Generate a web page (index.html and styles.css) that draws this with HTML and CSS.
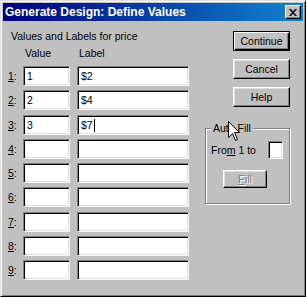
FILE: index.html
```html
<!doctype html>
<html>
<head>
<title>Generate Design: Define Values</title>
<link rel="stylesheet" href="styles.css">
</head>
<body>
	<div class="window">
		<div class="titlebar">
			<span class="title">Generate Design: Define Values</span>
			<span class="closeBtn"><svg width="8" height="7" viewBox="0 0 8 7"><path d="M0 0 L2 0 L4 2.5 L6 0 L8 0 L5 3.5 L8 7 L6 7 L4 4.5 L2 7 L0 7 L3 3.5 Z" fill="#000"/></svg></span>
		</div>

		<div class="client">
			<div class="values">
				<div class="caption">Values and Labels for price</div>
				<div class="grid">
					<span></span><span class="head">Value</span><span class="head">Label</span>
					<span class="num"><u>1</u>:</span><span class="field">1</span><span class="field">$2</span>
					<span class="num"><u>2</u>:</span><span class="field">2</span><span class="field">$4</span>
					<span class="num"><u>3</u>:</span><span class="field">3</span><span class="field">$7<span class="caret"></span></span>
					<span class="num"><u>4</u>:</span><span class="field"></span><span class="field"></span>
					<span class="num"><u>5</u>:</span><span class="field"></span><span class="field"></span>
					<span class="num"><u>6</u>:</span><span class="field"></span><span class="field"></span>
					<span class="num"><u>7</u>:</span><span class="field"></span><span class="field"></span>
					<span class="num"><u>8</u>:</span><span class="field"></span><span class="field"></span>
					<span class="num"><u>9</u>:</span><span class="field"></span><span class="field"></span>
				</div>
			</div>

			<div class="side">
				<button class="btn btnDefault">Continue</button>
				<button class="btn">Cancel</button>
				<button class="btn">Help</button>
				<fieldset class="group">
					<legend>Auto Fill</legend>
					<div class="fromRow">
						<span>Fro<u>m</u> 1 to</span><span class="field fieldSmall"></span>
					</div>
					<button class="btn btnFill" disabled><u>F</u>ill</button>
				</fieldset>
			</div>
		</div>

		<svg class="cursor" width="13" height="20" viewBox="0 0 13 20"><path d="M0.5 0.5 L0.5 16.5 L4.5 12.5 L7.5 19.5 L9.5 18.5 L6.5 11.5 L11.5 11.5 Z" fill="#fff" stroke="#000" stroke-width="1"/></svg>
	</div>
</body>
</html>
```

FILE: styles.css
```css
body {
	margin: 0;
	font-family: "Liberation Sans", Arial, sans-serif;
	font-size: 10.5px;
	color: #000;
}

.window {
	position: relative;
	width: 306px;
	height: 297px;
	box-sizing: border-box;
	background-color: #c0c0c0;
	border-top: 1px solid #dfdfdf;
	border-left: 1px solid #dfdfdf;
	border-right: 1px solid #000;
	border-bottom: 1px solid #000;
	box-shadow: inset 1px 1px #fff, inset -1px -1px #808080;
	padding: 2px;
}

.titlebar {
	display: flex;
	align-items: center;
	justify-content: space-between;
	height: 18px;
	padding-left: 2px;
	padding-right: 2px;
	background: linear-gradient(to right, #000080, #1084d0);
}

.title {
	color: #fff;
	font-weight: bold;
	font-size: 12px;
	white-space: nowrap;
}

.closeBtn {
	display: flex;
	align-items: center;
	justify-content: center;
	width: 16px;
	height: 14px;
	box-sizing: border-box;
	background-color: #c0c0c0;
	border-top: 1px solid #fff;
	border-left: 1px solid #fff;
	border-right: 1px solid #000;
	border-bottom: 1px solid #000;
	box-shadow: inset -1px -1px #808080;
}

.client {
	display: flex;
	padding-left: 5px;
}

.values {
	padding-top: 9px;
}

.caption {
	line-height: 12px;
	margin-left: 3px;
	white-space: nowrap;
}

.grid {
	display: grid;
	grid-template-columns: 8px 47px 112px;
	column-gap: 7px;
	row-gap: 4.25px;
	margin-top: 5px;
	align-items: center;
}

.head {
	line-height: 12px;
	padding-left: 2px;
	margin-bottom: 2.75px;
}

.num {
	white-space: nowrap;
}

.field {
	display: block;
	height: 20px;
	line-height: 18px;
	box-sizing: border-box;
	padding-left: 3px;
	background-color: #fff;
	border-top: 1px solid #808080;
	border-left: 1px solid #808080;
	border-right: 1px solid #fff;
	border-bottom: 1px solid #fff;
	box-shadow: inset 1px 1px #000, inset -1px -1px #dfdfdf;
	white-space: nowrap;
}

.caret {
	display: inline-block;
	width: 1px;
	height: 13px;
	background-color: #000;
	vertical-align: middle;
	margin-left: 1px;
}

.side {
	display: flex;
	flex-direction: column;
	align-items: flex-end;
	padding-top: 10px;
	margin-left: 16px;
	width: 86px;
}

.btn {
	width: 57px;
	height: 20px;
	box-sizing: border-box;
	margin: 0 1px 8px 0;
	padding: 0;
	font-family: inherit;
	font-size: 10.5px;
	color: #000;
	background-color: #c0c0c0;
	border-top: 1px solid #fff;
	border-left: 1px solid #fff;
	border-right: 1px solid #000;
	border-bottom: 1px solid #000;
	box-shadow: inset -1px -1px #808080, inset 1px 1px #dfdfdf;
}

.btnDefault {
	border: 1px solid #000;
	box-shadow: inset 1px 1px #fff, inset -1px -1px #000, inset -2px -2px #808080;
}

.group {
	align-self: stretch;
	margin: 7px 0 0 0;
	padding: 7px 6px 15px 5px;
	border: 1px solid #808080;
	box-shadow: inset 1px 1px #fff, 1px 1px #fff;
	width: 85px;
	box-sizing: border-box;
}

.group legend {
	padding: 0 2px;
	line-height: 12px;
	background-color: #c0c0c0;
}

.fromRow {
	display: flex;
	align-items: center;
	white-space: nowrap;
}

.fieldSmall {
	width: 15px;
	height: 18px;
	margin-left: auto;
}

.btnFill {
	width: 44px;
	height: 18px;
	margin: 11px 0 0 12px;
	color: #808080;
	font-size: 11px;
	text-shadow: 1px 1px #fff;
}

.cursor {
	position: absolute;
	left: 227px;
	top: 120px;
}
```
